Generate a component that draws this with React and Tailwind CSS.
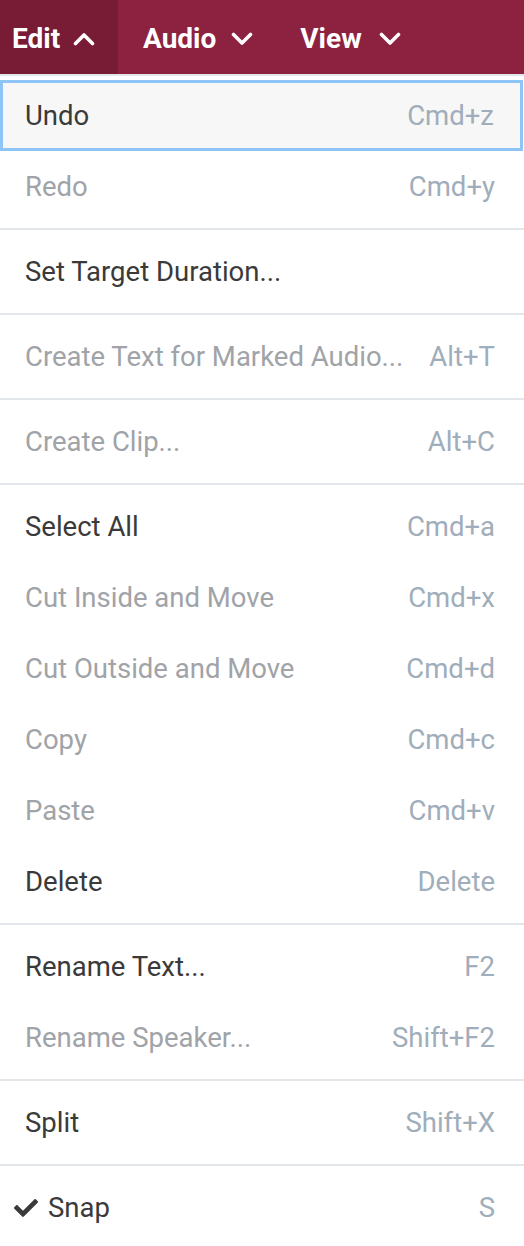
import React from "react";
import { FaCheck } from "react-icons/fa";

const Chevron = ({ up }) => (
  <svg width="22" height="14" viewBox="0 0 22 14" className="shrink-0">
    <polyline
      points={up ? "2.5,11.5 11,3 19.5,11.5" : "2.5,2.5 11,11 19.5,2.5"}
      fill="none"
      stroke="white"
      strokeWidth="3.6"
      strokeLinecap="round"
      strokeLinejoin="round"
    />
  </svg>
);

const groups = [
  [
    { label: "Undo", key: "Cmd+z", enabled: true, focused: true },
    { label: "Redo", key: "Cmd+y" },
  ],
  [{ label: "Set Target Duration...", key: "", enabled: true }],
  [{ label: "Create Text for Marked Audio...", key: "Alt+T" }],
  [{ label: "Create Clip...", key: "Alt+C" }],
  [
    { label: "Select All", key: "Cmd+a", enabled: true },
    { label: "Cut Inside and Move", key: "Cmd+x" },
    { label: "Cut Outside and Move", key: "Cmd+d" },
    { label: "Copy", key: "Cmd+c" },
    { label: "Paste", key: "Cmd+v" },
    { label: "Delete", key: "Delete", enabled: true },
  ],
  [
    { label: "Rename Text...", key: "F2", enabled: true },
    { label: "Rename Speaker...", key: "Shift+F2" },
  ],
  [{ label: "Split", key: "Shift+X", enabled: true }],
  [{ label: "Snap", key: "S", enabled: true, checked: true }],
];

function Item({ item }) {
  return (
    <div
      className={
        "flex h-[71px] items-center justify-between pl-[25px] pr-[29px] " +
        (item.focused
          ? "bg-[#f7f7f7] shadow-[inset_0_0_0_3px_#8fc4f6] mr-[1px] pr-[28px]"
          : "")
      }
    >
      <div className="flex items-center whitespace-nowrap">
        {item.checked && (
          <FaCheck className="-ml-[11px] mr-[10px] text-[24px] text-[#3a3a3a]" />
        )}
        <span
          className={
            "text-[27.5px] " + (item.enabled ? "text-[#3a3a3a]" : "text-[#a0a3a7]")
          }
        >
          {item.label}
        </span>
      </div>
      <span className="whitespace-nowrap text-[27.5px] text-[#a0adba]">{item.key}</span>
    </div>
  );
}

export default function App() {
  return (
    <div
      className="w-[524px] h-[1246px] overflow-hidden bg-white"
      style={{ fontFamily: "Roboto, 'Liberation Sans', sans-serif" }}
    >
      <div className="flex h-[74px] bg-[#8c2140] text-white">
        <div className="flex w-[118px] items-center gap-[13px] bg-[#781c36] pl-[12px] pt-[3px]">
          <span className="text-[28px] font-bold">Edit</span>
          <Chevron up />
        </div>
        <div className="flex items-center gap-[15px] pl-[25px] pt-[3px]">
          <span className="text-[28px] font-bold">Audio</span>
          <Chevron />
        </div>
        <div className="flex items-center gap-[17px] pl-[47px] pt-[3px]">
          <span className="text-[28px] font-bold">View</span>
          <Chevron />
        </div>
      </div>
      <div className="border-t-2 border-[#e3e7eb] pt-[4px]">
        {groups.map((g, i) => (
          <div key={i}>
            {i > 0 && <div className="my-[6px] h-[2px] bg-[#e3e7eb]" />}
            {g.map((item) => (
              <Item key={item.label} item={item} />
            ))}
          </div>
        ))}
      </div>
    </div>
  );
}
